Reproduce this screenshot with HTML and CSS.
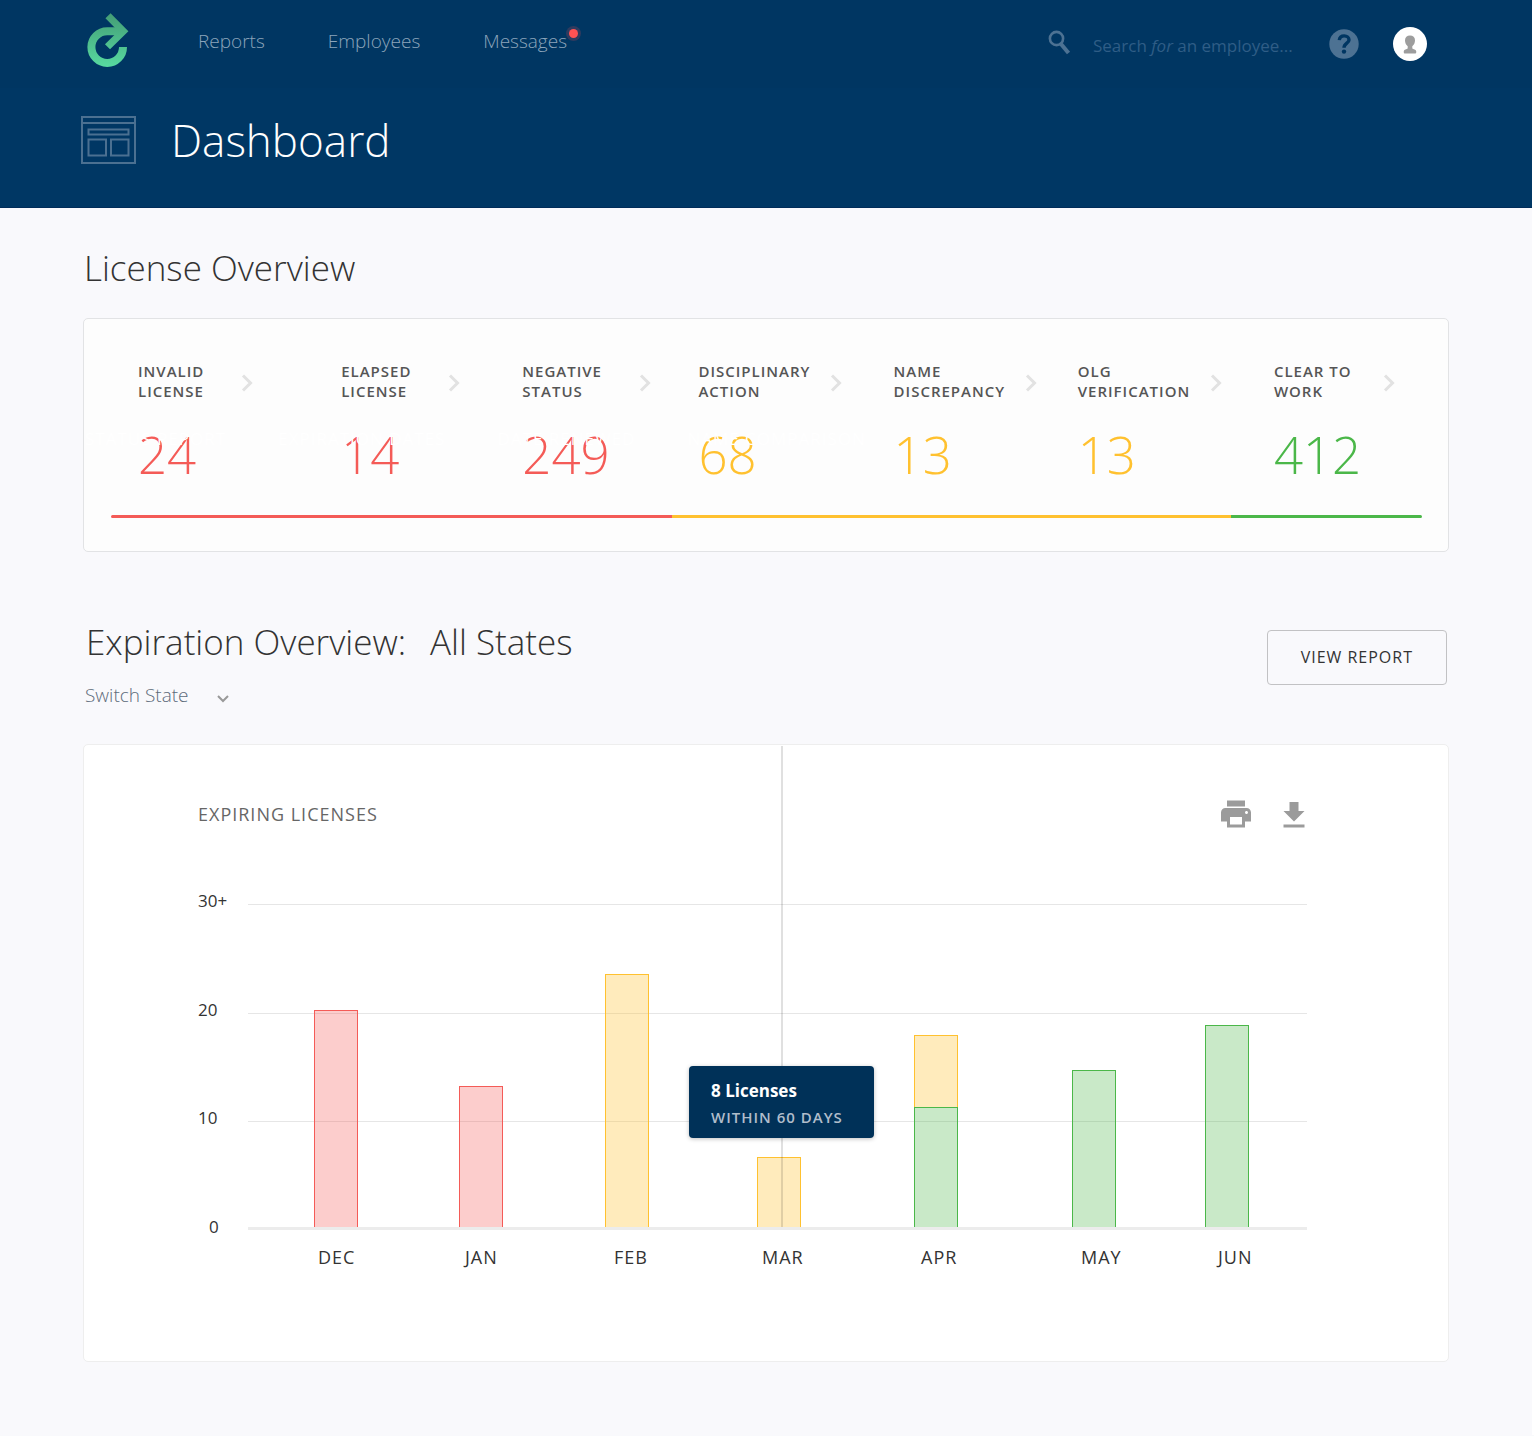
FILE: index.html
```html
<!DOCTYPE html>
<html lang="en">
<head>
<meta charset="utf-8">
<meta name="viewport" content="width=device-width, initial-scale=1">
<title>Dashboard</title>
<link rel="stylesheet" href="styles.css">
</head>
<body>
<header class="header">
  <div class="topbar">
    <a class="logo" href="#" aria-label="Home">
      <svg width="44" height="56" viewBox="86 12 44 56" fill="none">
        <defs><linearGradient id="logo-green" gradientUnits="userSpaceOnUse" x1="0" y1="12" x2="0" y2="68"><stop offset="0" stop-color="#439b74"/><stop offset="1" stop-color="#58dba1"/></linearGradient></defs>
        <path d="M123 47A15.800 15.800 0 1 1 107.300 31.300H122" stroke="url(#logo-green)" stroke-width="8"/>
        <path d="M108 15.800L123.300 31.200L107.500 46.700" stroke="url(#logo-green)" stroke-width="7.200"/>
      </svg>
    </a>
    <nav class="nav" aria-label="Main">
      <a class="nav-link" href="#">Reports</a>
      <a class="nav-link" href="#">Employees</a>
      <a class="nav-link" href="#">Messages<span class="unread"></span></a>
    </nav>
    <div class="tools">
      <div class="search">
        <svg width="24" height="26" viewBox="0 0 24 26" fill="none" stroke="#4d7293"><circle cx="8.500" cy="8.500" r="6.600" stroke-width="2.600"/><path d="M13 14L20.500 23" stroke-width="4"/></svg>
        <div class="search-field">
          <input class="search-input" id="search" type="text" placeholder=" ">
          <label class="search-hint" for="search">Search <em>for</em> an employee...</label>
        </div>
      </div>
      <button class="icon-button" type="button" aria-label="Help">
        <svg width="30" height="30" viewBox="0 0 30 30" fill="none"><circle cx="15" cy="15" r="14.700" fill="#4d7293"/><path d="M10.300 11.200C10.600 8.300 12.500 6.900 15.200 6.900C18 6.900 20 8.500 20 11C20 14.200 15 14.300 15 18.800" stroke="#003662" stroke-width="3.400"/><circle cx="15" cy="22.600" r="2.200" fill="#003662"/></svg>
      </button>
      <button class="icon-button avatar" type="button" aria-label="Account">
        <svg width="34" height="34" viewBox="0 0 34 34"><circle cx="17" cy="17" r="17" fill="#fff"/><path d="M17 8.500C20 8.500 22 10.300 22 13.200C22 15.800 21 17.800 19.300 19.200V21.500C21.500 22.500 23.300 22.800 23.300 24.800Q23.300 26.500 22.500 26.500H11.500Q10.700 26.500 10.700 24.800C10.700 22.800 12.500 22.500 14.700 21.500V19.200C13 17.800 12 15.800 12 13.200C12 10.300 14 8.500 17 8.500Z" fill="#9d9d9d"/></svg>
      </button>
    </div>
  </div>
  <div class="titlebar">
    <svg width="56" height="50" viewBox="0 0 56 50" fill="none" stroke="#4b7091" stroke-width="2"><path d="M2 2H55V48H2ZM2 8H55M8.500 14.500H48.500V19.500H8.500ZM8.500 24.500H26V40.500H8.500ZM31 24.500H48.500V40.500H31Z"/></svg>
    <h1 class="title">Dashboard</h1>
  </div>
</header>
<main class="content">
  <section>
    <h2 class="heading">License Overview</h2>
    <div class="overview">
      <div class="stats">
        <a class="stat red" href="#"><span class="stat-head"><span>Invalid<br>License</span><svg class="arrow" viewBox="0 0 12 18"><path d="M2 1.500L9.500 9L2 16.500"/></svg></span><strong class="figure">24</strong></a>
        <a class="stat red" href="#"><span class="stat-head"><span>Elapsed<br>License</span><svg class="arrow" viewBox="0 0 12 18"><path d="M2 1.500L9.500 9L2 16.500"/></svg></span><strong class="figure">14</strong></a>
        <a class="stat red" href="#"><span class="stat-head"><span>Negative<br>Status</span><svg class="arrow" viewBox="0 0 12 18"><path d="M2 1.500L9.500 9L2 16.500"/></svg></span><strong class="figure">249</strong></a>
        <a class="stat amber long" href="#"><span class="stat-head"><span>Disciplinary<br>Action</span><svg class="arrow" viewBox="0 0 12 18"><path d="M2 1.500L9.500 9L2 16.500"/></svg></span><strong class="figure">68</strong></a>
        <a class="stat amber long" href="#"><span class="stat-head"><span>Name<br>Discrepancy</span><svg class="arrow" viewBox="0 0 12 18"><path d="M2 1.500L9.500 9L2 16.500"/></svg></span><strong class="figure">13</strong></a>
        <a class="stat amber long" href="#"><span class="stat-head"><span>OLG<br>Verification</span><svg class="arrow" viewBox="0 0 12 18"><path d="M2 1.500L9.500 9L2 16.500"/></svg></span><strong class="figure">13</strong></a>
        <a class="stat green last" href="#"><span class="stat-head"><span>Clear to<br>Work</span><svg class="arrow" viewBox="0 0 12 18"><path d="M2 1.500L9.500 9L2 16.500"/></svg></span><strong class="figure">412</strong></a>
      </div>
      <div class="meter"><span class="meter-red"></span><span class="meter-amber"></span><span class="meter-green"></span></div>
      <div class="report-labels" aria-hidden="true"><span>Status report</span><span>Expiration dates</span><span>Date renewed</span><span>Name comparison</span></div>
    </div>
  </section>
  <section>
    <div class="section-head">
      <div>
        <h2 class="heading heading-split"><span>Expiration Overview:</span><span>All States</span></h2>
        <div class="switcher">
          <select class="state-select" aria-label="Switch State"><option>Switch State</option></select>
          <svg class="caret" width="12" height="8" viewBox="0 0 12 8"><path d="M1 1L6 6L11 1"/></svg>
        </div>
      </div>
      <button class="report-button" type="button">View report</button>
    </div>
    <div class="chart-card">
      <div class="chart-head">
        <h3 class="chart-title">Expiring Licenses</h3>
        <div class="chart-actions">
          <button class="icon-button" type="button" aria-label="Print"><svg width="36" height="36" viewBox="0 0 24 24" fill="#9b9b9b"><path d="M19 8H5c-1.660 0-3 1.340-3 3v6h4v4h12v-4h4v-6c0-1.660-1.340-3-3-3zm-3 11H8v-5h8v5zm3-7c-.550 0-1-.450-1-1s.450-1 1-1 1 .450 1 1-.450 1-1 1zm-1-9H6v4h12V3z"/></svg></button>
          <button class="icon-button" type="button" aria-label="Download"><svg width="36" height="36" viewBox="0 0 24 24" fill="#9b9b9b"><path d="M19 10h-4V4H9v6H5l7 7 7-7zM5 19v2h14v-2H5z"/></svg></button>
        </div>
      </div>
      <div class="chart">
        <div class="axis"><span>30+</span><span>20</span><span>10</span><span class="zero">0</span></div>
        <div class="plot">
          <div class="gridlines"><i></i><i></i><i></i></div>
          <div class="bars">
            <div class="column"><div class="bar red" style="height:217px"></div></div>
            <div class="column"><div class="bar red" style="height:141px"></div></div>
            <div class="column"><div class="bar amber" style="height:253px"></div></div>
            <div class="column"><span class="cursor"></span><div class="bar amber" style="height:70px"></div>
              <div class="tooltip" role="tooltip"><strong class="tooltip-count">8 Licenses</strong><span class="tooltip-range">Within 60 days</span></div>
            </div>
            <div class="column"><div class="bar amber" style="height:72px"></div><div class="bar green" style="height:120px"></div></div>
            <div class="column"><div class="bar green" style="height:157px"></div></div>
            <div class="column"><div class="bar green" style="height:202px"></div></div>
          </div>
        </div>
        <div class="months"><span>Dec</span><span>Jan</span><span>Feb</span><span>Mar</span><span>Apr</span><span>May</span><span>Jun</span></div>
      </div>
    </div>
  </section>
</main>
</body>
</html>
```
FILE: styles.css
```css
* { box-sizing: border-box; }

:root {
  --red: #f45b57;
  --amber: #ffc12f;
  --green: #4bb749;
  --line: #ececec;
}

body {
  margin: 0;
  border-right: 2px solid #fff;
  background: #f9f9fc;
  color: #333;
  font-family: "Open Sans", "Noto Sans", sans-serif;
  font-size: 17px;
}

h1, h2, h3 { margin: 0; font-weight: 300; }
a { color: inherit; text-decoration: none; }
button, input, select { font: inherit; color: inherit; }
svg { display: block; flex: none; }

.red { --tone: var(--red); --fill: rgba(244, 91, 87, .3); }
.amber { --tone: var(--amber); --fill: rgba(255, 193, 47, .32); }
.green { --tone: var(--green); --fill: rgba(75, 183, 73, .3); }

.icon-button {
  padding: 0;
  border: 0;
  background: none;
  cursor: pointer;
}

/* Header */
.header {
  background: #003764;
  border-bottom: 1px solid #002c59;
}

.topbar {
  display: flex;
  height: 88px;
  padding: 12px 105px 0 86px;
  background: #003662;
}

.nav {
  display: flex;
  gap: 63px;
  margin-left: 68px;
  padding-top: 16px;
}

.nav-link {
  position: relative;
  height: 26px;
  color: #8ca5bb;
  font-size: 19px;
  font-weight: 300;
  line-height: 26px;
}

.unread {
  position: absolute;
  top: 1px;
  right: -11px;
  width: 9px;
  height: 9px;
  border-radius: 50%;
  background: #ff5253;
  box-shadow: 0 0 0 3px rgba(255, 82, 83, .18);
}

.tools {
  display: flex;
  align-items: center;
  height: 64px;
  margin-left: auto;
}

.tools .avatar { margin-left: 34px; }

.search {
  display: flex;
  gap: 21px;
  margin-right: 14px;
}

.search-field {
  display: grid;
  width: 222px;
  padding-top: 3px;
  line-height: 26px;
}

.search-input, .search-hint { grid-area: 1 / 1; }

.search-input {
  width: 100%;
  padding: 0;
  border: 0;
  outline: 0;
  background: none;
  color: #fff;
}

.search-hint {
  color: #2f5d86;
  white-space: nowrap;
  pointer-events: none;
}

.search-input:not(:placeholder-shown) + .search-hint { visibility: hidden; }

.titlebar {
  display: flex;
  align-items: center;
  gap: 35px;
  height: 119px;
  padding: 0 80px 16px;
}

.title {
  color: #fff;
  font-size: 44px;
  line-height: 60px;
}

/* Page body */
.content { padding: 38px 83px 73px; }

.heading {
  padding-left: 1px;
  font-size: 35px;
  line-height: 44px;
}

.heading-split { display: flex; gap: 24px; }

.overview {
  position: relative;
  margin: 28px 0 68px;
  padding: 42px 26px 33px 27px;
  border: 1px solid #e2e3e5;
  border-radius: 5px;
  background: #fdfdfd;
}

.stats {
  display: grid;
  grid-template-columns: 203fr 181fr 176fr 195fr 184fr 196fr 148fr;
  padding-left: 27px;
}

.stat-head {
  display: flex;
  align-items: center;
  gap: 37px;
  color: #555;
  font-size: 15px;
  font-weight: 600;
  letter-spacing: 1px;
  line-height: 20px;
  text-transform: uppercase;
  white-space: nowrap;
}

.long .stat-head { gap: 20px; }
.last .stat-head { gap: 31px; }

.arrow {
  width: 12px;
  height: 18px;
  margin-top: 3px;
  fill: none;
  stroke: #e2e2e2;
  stroke-width: 3;
}

.figure {
  display: block;
  margin-top: 18px;
  color: var(--tone);
  font-size: 51px;
  font-weight: 300;
  line-height: 70px;
}

.meter {
  display: grid;
  grid-template-columns: 561fr 559fr 191fr;
  height: 3px;
  margin-top: 26px;
  overflow: hidden;
  border-radius: 2px;
}

.meter-red { background: var(--red); }
.meter-amber { background: var(--amber); }
.meter-green { background: var(--green); }

.report-labels {
  position: absolute;
  top: 108px;
  left: 1px;
  display: flex;
  gap: 52px;
  color: #fff;
  font-size: 17px;
  letter-spacing: 1px;
  line-height: 24px;
  text-transform: uppercase;
  white-space: nowrap;
  pointer-events: none;
}

.section-head {
  display: flex;
  align-items: flex-start;
  justify-content: space-between;
  padding: 0 2px;
}

.switcher {
  display: grid;
  grid-template-columns: 145px;
  align-items: center;
  margin-top: 18px;
  color: #5d6b7a;
  font-size: 19px;
  font-weight: 300;
}

.state-select, .caret { grid-area: 1 / 1; }

.state-select {
  appearance: none;
  height: 26px;
  padding: 0;
  border: 0;
  background: none;
}

.caret {
  justify-self: end;
  margin: 8px 1px 0 0;
  fill: none;
  stroke: #999;
  stroke-width: 2;
  pointer-events: none;
}

.report-button {
  height: 55px;
  margin-top: 10px;
  padding: 0 33px 2px;
  border: 1px solid #c2c2c4;
  border-radius: 4px;
  background: none;
  font-size: 16px;
  letter-spacing: 1px;
  text-transform: uppercase;
}

.chart-card {
  margin-top: 36px;
  padding: 51px 141px 92px 114px;
  border: 1px solid #eee;
  border-radius: 5px;
  background: #fff;
}

.chart-head {
  display: flex;
  align-items: center;
  justify-content: space-between;
}

.chart-title {
  color: #666;
  font-size: 18px;
  font-weight: 400;
  letter-spacing: 1px;
  text-transform: uppercase;
}

.chart-actions {
  display: flex;
  gap: 22px;
  margin-right: -5px;
}

.chart {
  display: grid;
  grid-template-columns: 50px 1fr;
  margin-top: 72px;
}

.axis {
  display: flex;
  flex-direction: column;
  justify-content: space-between;
  height: 350px;
  margin: -15px 0 -9px;
  line-height: 24px;
}

.axis .zero { padding-left: 11px; }

.plot, .gridlines { display: grid; }
.gridlines, .bars { grid-area: 1 / 1; }

.gridlines {
  grid-template-rows: 109px 108px 106px;
  height: 326px;
  border-bottom: 3px solid var(--line);
}

.gridlines i { border-top: 1px solid #e6e6e6; }

.bars {
  display: grid;
  grid-template-columns: 145fr 146fr 152fr 157fr 158fr 133fr 102fr;
  height: 323px;
  padding-left: 66px;
}

.column {
  position: relative;
  display: flex;
  flex-direction: column;
  justify-content: flex-end;
}

.bar {
  width: 44px;
  border: solid var(--tone);
  border-width: 1px 1px 0;
  background: var(--fill);
}

.cursor {
  position: absolute;
  bottom: 0;
  left: 24px;
  width: 2px;
  height: 481px;
  background: rgba(0, 0, 0, .12);
}

.tooltip {
  position: absolute;
  bottom: 89px;
  left: -68px;
  display: grid;
  width: 185px;
  padding: 12px 22px 8px;
  border-radius: 4px;
  background: #003158;
  box-shadow: 0 1px 4px rgba(0, 0, 0, .25);
  white-space: nowrap;
}

.tooltip-count {
  color: #fff;
  font-size: 17px;
  line-height: 26px;
}

.tooltip-range {
  color: #b0bdcb;
  font-size: 15px;
  font-weight: 600;
  letter-spacing: 1px;
  line-height: 26px;
  text-transform: uppercase;
}

.months {
  display: grid;
  grid-column: 2;
  grid-template-columns: 147fr 149fr 148fr 159fr 160fr 137fr 89fr;
  margin-top: 15px;
  padding-left: 70px;
  font-size: 18px;
  letter-spacing: 1px;
  line-height: 24px;
  text-transform: uppercase;
}
```
